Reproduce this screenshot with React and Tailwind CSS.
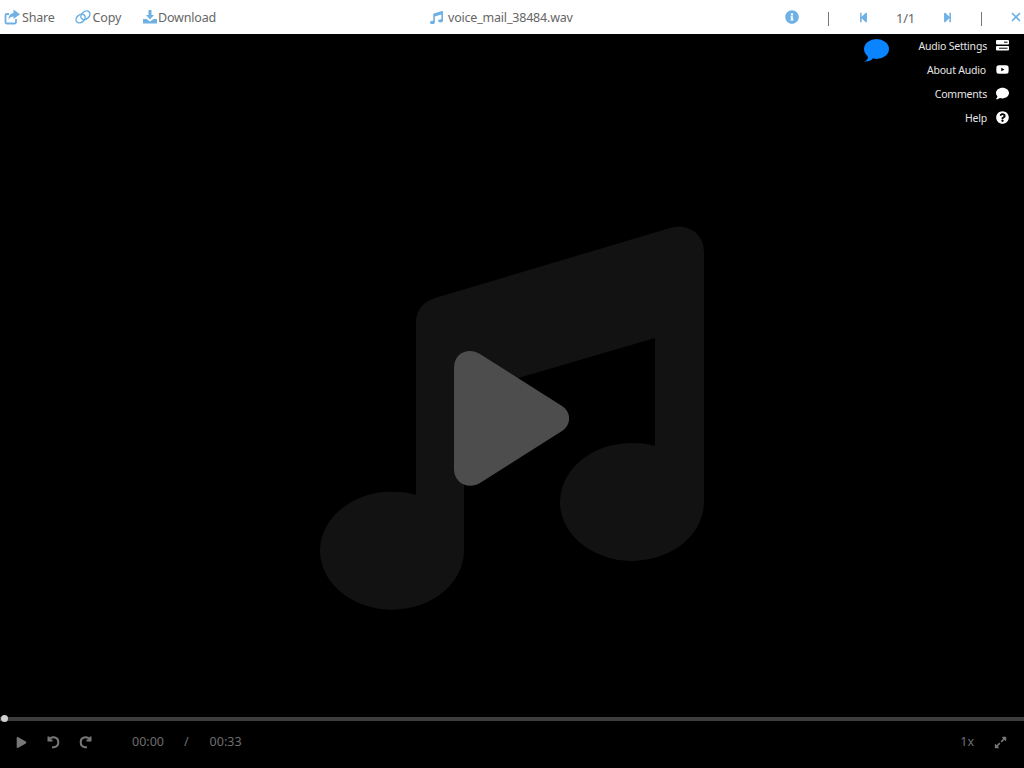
import { FaComment, FaExpandAlt, FaInfoCircle, FaMusic, FaPlay, FaQuestionCircle, FaStepBackward, FaStepForward, FaYoutube } from "react-icons/fa";
import { X } from "lucide-react";

const ShareIcon = () => (
    <svg viewBox="0 0 16 16" className="mb-[3px] h-[16px] w-[16px] fill-none">
        <path d="M12 10v3.200a1.300 1.300 0 0 1-1.300 1.300H2.800a1.300 1.300 0 0 1-1.300-1.300V6.300A1.300 1.300 0 0 1 2.800 5H5" stroke="#6fb1e4" strokeWidth="1.800" />
        <path d="M9.500 0.500l6.500 4.800-6.500 4.800V7.500c-2.300 0-4 .8-5 3.200 0-3.700 1.800-6.300 5-6.600z" fill="#6fb1e4" />
    </svg>
);

const LinkIcon = () => (
    <svg viewBox="0 0 16 16" className="mb-[3px] h-[16px] w-[16px] fill-none" stroke="#6fb1e4" strokeWidth="1.500">
        <ellipse cx="5.600" cy="9.500" rx="5" ry="3.700" transform="rotate(-40 5.600 9.500)" />
        <ellipse cx="10.400" cy="6.300" rx="5" ry="3.700" transform="rotate(-40 10.400 6.300)" />
    </svg>
);

const DownloadIcon = () => (
    <svg viewBox="0 0 14 14" className="mb-[3px] h-[14px] w-[14px]" fill="#6fb1e4">
        <path d="M5.500 0h3v5H11L7 9.500 3 5h2.500z" />
        <path d="M0 9h3.500L7 11.500 10.500 9H14v4.500H0z" />
    </svg>
);

const SettingsIcon = () => (
    <svg viewBox="0 0 13 11" className="h-[11px] w-[13px]">
        <rect x="0" y="0" width="13" height="4.500" rx="1" fill="#fff" />
        <rect x="0" y="6" width="13" height="4.500" rx="1" fill="#fff" />
        <rect x="8" y="1.700" width="3.500" height="1" fill="#000" />
        <rect x="3" y="7.700" width="8.500" height="1" fill="#000" />
    </svg>
);

const BubbleIcon = () => (
    <svg viewBox="0 0 26 23" className="h-[23px] w-[26px]">
        <ellipse cx="13.500" cy="10" rx="12.500" ry="10" fill="#0a84ff" />
        <path d="M4 15 L5 19 C4.500 20.500 3 22 1 22.500 C5 23 8 21.500 10 19.500z" fill="#0a84ff" />
    </svg>
);

const UndoIcon = ({ className }) => (
    <svg viewBox="0 0 14 14" className={`h-[14px] w-[14px] fill-none stroke-[#777] ${className}`} strokeWidth="2">
        <path d="M2.500 1.500v4h4" />
        <path d="M3 5C4.200 3 6 2 8 2.300a5 5 0 0 1 0 9.900c-.6.100-1.200.1-2 0" />
    </svg>
);

const BigNote = () => (
    <svg viewBox="0 0 410 405" className="h-[405px] w-[410px] shrink-0">
        <path
            d="M106 108C106 95 113 87 125 83L360 13C380 8 394 20 394 37L394 287A72 59 0 1 1 345 231L345 123L154 179L154 336A72 59 0 1 1 106 280Z"
            fill="#121212"
        />
        <path d="M144 153C144 138 158 132 170 139L252 191C261 197 262 209 252 216L170 268C158 275 144 268 144 254Z" fill="#4d4d4d" />
    </svg>
);

const menuItems = [
    { label: "Audio Settings", icon: <SettingsIcon />, mr: "mr-0" },
    { label: "About Audio", icon: <FaYoutube className="text-[15px] text-white" />, mr: "mr-px" },
    { label: "Comments", icon: <FaComment className="text-[13px] text-white" />, mr: "mr-0" },
    { label: "Help", icon: <FaQuestionCircle className="text-[13px] text-white" />, mr: "mr-0" },
];

export default function App() {
    return (
        <div className="flex h-screen w-full flex-col overflow-hidden bg-black font-['Noto_Sans',sans-serif]">
            <header className="flex h-[34px] shrink-0 items-center bg-white pt-[3px] text-[12.5px] tracking-[-0.2px] text-[#666]">
                <div className="flex w-[430px] shrink-0 items-center pl-[4px]">
                    <span className="flex items-center gap-[2px]">
                        <ShareIcon />
                        Share
                    </span>
                    <span className="ml-[20px] flex items-center gap-[2px]">
                        <LinkIcon />
                        Copy
                    </span>
                    <span className="ml-[22px] flex items-center gap-[1px]">
                        <DownloadIcon />
                        Download
                    </span>
                </div>
                <div className="flex items-center gap-[5px]">
                    <FaMusic className="mb-[2px] text-[13px] text-[#6fb1e4]" />
                    voice_mail_38484.wav
                </div>
                <div className="ml-auto flex items-center pr-[1px]">
                    <FaInfoCircle className="mb-[3px] text-[14px] text-[#6fb1e4]" />
                    <span className="ml-[29px] h-[14px] w-px bg-[#777]" />
                    <FaStepBackward className="mb-[3px] ml-[29px] text-[11px] text-[#6fb1e4]" />
                    <span className="ml-[27px] text-[13px]">1/1</span>
                    <FaStepForward className="mb-[3px] ml-[27px] text-[11px] text-[#6fb1e4]" />
                    <span className="ml-[28px] h-[14px] w-px bg-[#777]" />
                    <X className="mb-[3px] ml-[27px] h-[14px] w-[14px] text-[#6fb1e4]" strokeWidth={3} />
                </div>
            </header>

            <main className="relative flex min-h-0 flex-1 items-center justify-center pl-[6px] pt-[84px]">
                <BigNote />
                <div className="absolute left-[863px] top-[5px]">
                    <BubbleIcon />
                </div>
                <ul className="absolute right-[15px] top-0 flex flex-col pt-[1px] text-[10.5px] tracking-[-0.2px] text-[#e6e6e6]">
                    {menuItems.map((item) => (
                        <li key={item.label} className="flex h-[24px] items-center justify-end gap-[9px]">
                            <span className={item.mr}>{item.label}</span>
                            <span className="mb-[4px] flex w-[13px] justify-center">{item.icon}</span>
                        </li>
                    ))}
                </ul>
            </main>

            <div className="relative h-[4px] shrink-0 bg-[#3d3d3d]">
                <span className="absolute left-[1px] top-[-2px] h-[7px] w-[7px] rounded-full bg-[#d0d0d0]" />
            </div>

            <footer className="flex h-[47px] shrink-0 items-center pb-[5px] text-[12.5px] text-[#6e6e6e]">
                <FaPlay className="ml-[16px] text-[11px] text-[#777]" />
                <UndoIcon className="ml-[19px]" />
                <UndoIcon className="ml-[19px] -scale-x-100" />
                <span className="ml-[39px]">00:00</span>
                <span className="ml-[20px]">/</span>
                <span className="ml-[21px]">00:33</span>
                <span className="ml-auto">1x</span>
                <FaExpandAlt className="ml-[20px] mr-[17px] text-[13px] text-[#777]" />
            </footer>
        </div>
    );
}
